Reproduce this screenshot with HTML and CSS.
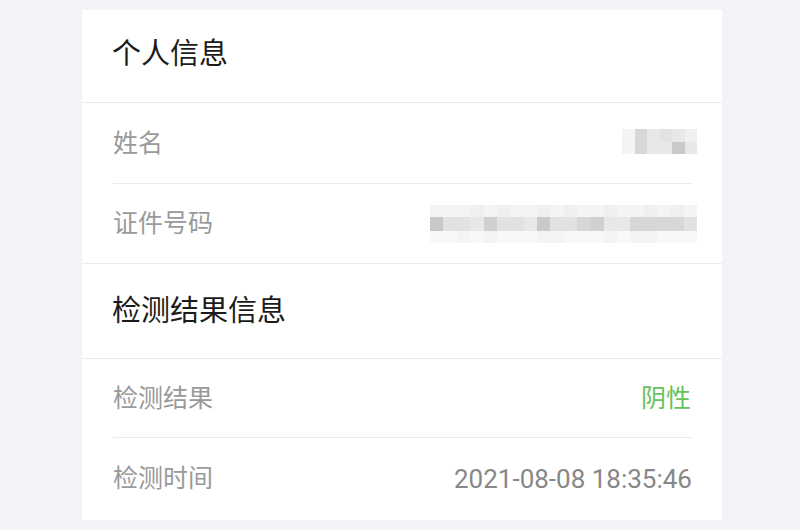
FILE: index.html
```html
<!DOCTYPE html>
<html lang="zh-CN">
<head>
    <meta charset="UTF-8">
    <meta name="viewport" content="width=device-width, initial-scale=1.0">
    <title>检测结果</title>
    <link rel="stylesheet" href="styles.css">
</head>
<body>
    <!-- Karte mit den Personendaten und dem Ergebnis -->
    <div class="card">
        <div class="section">
            <div class="head head-first">个人信息</div>
            <div class="row row-1">
                <span class="label">姓名</span>
                <!-- verpixelter Name -->
                <div class="mosaic mosaic-name">
                    <span class="g7"></span><span class="g3"></span><span class="g5"></span><span class="g4"></span><span class="g5"></span><span class="g6"></span>
                    <span class="g7"></span><span class="g3"></span><span class="g5"></span><span class="g5"></span><span class="g1"></span><span class="g5"></span>
                </div>
            </div>
            <div class="row row-2">
                <span class="label">证件号码</span>
                <!-- verpixelte Ausweisnummer -->
                <div class="mosaic mosaic-id">
                    <span class="g7"></span><span class="g7"></span><span class="g7"></span><span class="g6"></span><span class="g7"></span><span class="g6"></span><span class="g7"></span><span class="g7"></span><span class="g6"></span><span class="g7"></span><span class="g6"></span><span class="g7"></span><span class="g7"></span><span class="g6"></span><span class="g7"></span><span class="g7"></span><span class="g6"></span><span class="g7"></span><span class="g6"></span><span class="g7"></span>
                    <span class="g1"></span><span class="g4"></span><span class="g4"></span><span class="g5"></span><span class="g2"></span><span class="g4"></span><span class="g4"></span><span class="g5"></span><span class="g1"></span><span class="g4"></span><span class="g4"></span><span class="g3"></span><span class="g2"></span><span class="g5"></span><span class="g5"></span><span class="g3"></span><span class="g3"></span><span class="g3"></span><span class="g3"></span><span class="g4"></span>
                    <span class="g8"></span><span class="g8"></span><span class="g7"></span><span class="g8"></span><span class="g7"></span><span class="g8"></span><span class="g8"></span><span class="g8"></span><span class="g7"></span><span class="g7"></span><span class="g8"></span><span class="g8"></span><span class="g8"></span><span class="g7"></span><span class="g8"></span><span class="g7"></span><span class="g7"></span><span class="g8"></span><span class="g8"></span><span class="g8"></span>
                </div>
            </div>
        </div>
        <div class="section">
            <div class="head head-second">检测结果信息</div>
            <div class="row row-3">
                <span class="label">检测结果</span>
                <span class="value value-ok">阴性</span>
            </div>
            <div class="row row-4">
                <span class="label">检测时间</span>
                <span class="value value-time">2021-08-08 18:35:46</span>
            </div>
        </div>
    </div>
</body>
</html>
```

FILE: styles.css
```css
/* Allgemeines */
html, body {
    margin: 0;
    padding: 0;
    background-color: #f4f3f9;
    font-family: Roboto, "Noto Sans CJK SC", sans-serif;
}
/* Karte */
.card {
    width: 640px;
    height: 510px;
    margin: 10px 0 0 82px;
    background-color: #ffffff;
    display: flex;
    flex-direction: column;
}
.section + .section {
    border-top: 1px solid #ececec;
}
/* Ueberschriften */
.head {
    display: flex;
    align-items: center;
    padding-left: 30px;
    font-size: 29px;
    line-height: 1;
    color: #1b1b1b;
    border-bottom: 1px solid #ececec;
}
.head-first {
    height: 88px;
    padding-bottom: 4px;
}
.head-second {
    height: 94px;
}
/* Zeilen */
.row {
    display: flex;
    align-items: center;
    justify-content: space-between;
    margin: 0 29px 0 31px;
}
.row-1, .row-3 {
    border-bottom: 1px solid #ececec;
}
.row-1 { height: 80px; }
.row-2 { height: 79px; }
.row-3 { height: 78px; }
.row-4 { height: 81px; }
.label {
    font-size: 25px;
    line-height: 1;
    color: #9a9a9a;
}
.value {
    font-size: 25px;
    line-height: 1;
    color: #878787;
    margin-right: 2px;
}
.value-ok {
    color: #66c25a;
}
.value-time {
    font-size: 26px;
    margin-right: 1px;
}
/* Mosaik fuer unkenntliche Daten */
.mosaic {
    display: grid;
    margin-right: -4px;
}
.mosaic-name {
    grid-template-columns: repeat(6, 12.5px);
    grid-template-rows: 13px 12px;
    margin-top: -4px;
}
.mosaic-id {
    grid-template-columns: repeat(20, 13.35px);
    grid-template-rows: 12px 14px 12px;
}
.g1 { background-color: #c9c9c9; }
.g2 { background-color: #d0d0d0; }
.g3 { background-color: #d7d7d7; }
.g4 { background-color: #e2e2e2; }
.g5 { background-color: #e8e8e8; }
.g6 { background-color: #efefef; }
.g7 { background-color: #f4f4f4; }
.g8 { background-color: #f8f8f8; }
```
